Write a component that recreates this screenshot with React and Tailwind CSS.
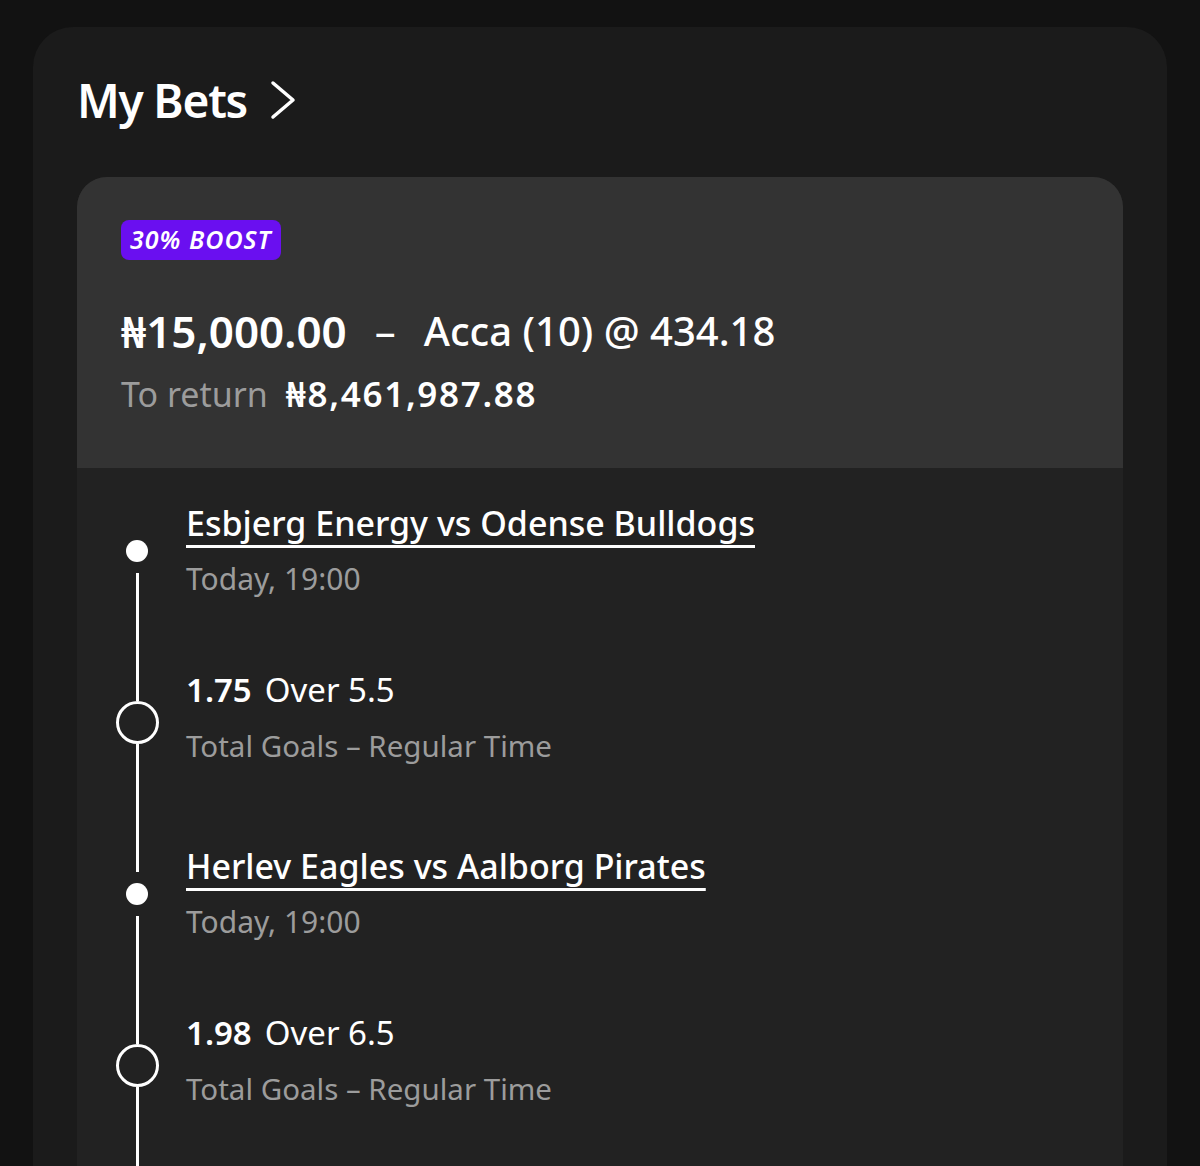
import React from "react";

const font = { fontFamily: '"Noto Sans", "Open Sans", sans-serif' };

function EventRow({ first, title, time }) {
  return (
    <div className="flex h-[166px]">
      <div className="flex w-[40px] flex-col items-center">
        <div className={first ? "w-[3px] flex-1" : "w-[3px] flex-1 bg-white"} />
        <div className="my-[11px] h-[22px] w-[22px] rounded-full bg-white" />
        <div className="w-[3px] flex-1 bg-white" />
      </div>
      <div className="ml-[29px] flex flex-col justify-center">
        <div className="h-[56px] leading-[56px] text-[34px] font-medium text-white underline decoration-[3px] underline-offset-[9px]">
          {title}
        </div>
        <div className="h-[56px] leading-[56px] text-[30px] text-[#9c9c9c]">{time}</div>
      </div>
    </div>
  );
}

function SelectionRow({ odds, pick, market }) {
  return (
    <div className="flex h-[177px]">
      <div className="flex w-[40px] flex-col items-center">
        <div className="w-[3px] flex-1 bg-white" />
        <div className="h-[43px] w-[43px] shrink-0 rounded-full border-[3px] border-white" />
        <div className="w-[3px] flex-1 bg-white" />
      </div>
      <div className="ml-[29px] flex flex-col justify-center pb-[10px]">
        <div className="h-[56px] leading-[56px] text-[33px] text-white">
          <span className="font-semibold">{odds}</span>
          <span className="ml-[13px]">{pick}</span>
        </div>
        <div className="h-[56px] leading-[56px] text-[29.5px] text-[#9c9c9c]">{market}</div>
      </div>
    </div>
  );
}

export default function App() {
  return (
    <div className="h-[1166px] overflow-hidden bg-[#121212] px-[33px] pt-[27px]" style={font}>
      <div className="min-h-[1200px] rounded-[40px] bg-[#1b1b1b] px-[44px] pt-[45px]">
        <div className="flex h-[56px] items-center gap-[22px]">
          <h1 className="text-[46px] font-semibold leading-none tracking-[-1.2px] text-white">My Bets</h1>
          <svg width="28" height="40" viewBox="0 0 28 40" fill="none">
            <polyline points="4,3 24,20 4,37" stroke="white" strokeWidth="3.5" strokeLinecap="round" strokeLinejoin="round" />
          </svg>
        </div>

        <div className="mt-[49px] overflow-hidden rounded-t-[30px] bg-[#222222]">
          <div className="h-[291px] bg-[#333333] px-[44px] pt-[43px]">
            <div className="inline-flex h-[40px] items-center rounded-[8px] bg-[#6a0ff0] px-[9px] text-[25px] font-semibold italic tracking-[1px] text-white">
              30% BOOST
            </div>
            <div className="mt-[46px] flex items-center leading-[50px] text-white">
              <span className="text-[44px] font-semibold">₦15,000.00</span>
              <span className="mx-[28px] text-[42px]">–</span>
              <span className="text-[40px] font-medium">Acca (10) @ 434.18</span>
            </div>
            <div className="mt-[17px] flex items-center leading-[42px]">
              <span className="text-[34px] text-[#9c9c9c]">To return</span>
              <span className="ml-[18px] text-[35px] font-semibold tracking-[1.7px] text-white">₦8,461,987.88</span>
            </div>
          </div>

          <div className="pl-[40px]">
            <EventRow first title="Esbjerg Energy vs Odense Bulldogs" time="Today, 19:00" />
            <SelectionRow odds="1.75" pick="Over 5.5" market="Total Goals – Regular Time" />
            <EventRow title="Herlev Eagles vs Aalborg Pirates" time="Today, 19:00" />
            <SelectionRow odds="1.98" pick="Over 6.5" market="Total Goals – Regular Time" />
            <div className="flex h-[80px] w-[40px] justify-center">
              <div className="h-full w-[3px] bg-white" />
            </div>
          </div>
        </div>
      </div>
    </div>
  );
}
